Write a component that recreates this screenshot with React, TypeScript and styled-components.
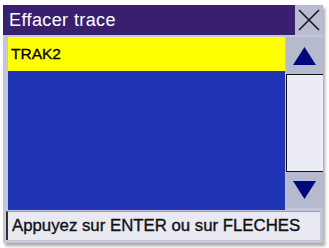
import React from 'react'
import styled, { createGlobalStyle } from 'styled-components'

const GlobalStyle = createGlobalStyle`
  body {
    margin: 0;
    background: #ffffff;
    font-family: "Liberation Sans", Arial, sans-serif;
  }
`

const Page = styled.div`
  width: 329px;
  height: 248px;
  padding: 5px 0 0 3px;
  box-sizing: border-box;
`

const Screen = styled.div`
  width: 320px;
  background: #c4c7da;
  display: flex;
  flex-direction: column;
  box-shadow: 2px 3px 3px rgba(0, 0, 0, 0.35);
`

const TitleBar = styled.div`
  display: flex;
  height: 30px;
`

const Title = styled.div`
  flex: 1;
  background: #3b1f6f;
  color: #ffffff;
  font-size: 18px;
  letter-spacing: 0.4px;
  line-height: 31px;
  padding-left: 6px;
`

const CloseButton = styled.div`
  width: 28px;
  background: #b9bcd0;
  display: flex;
  align-items: center;
  justify-content: center;
`

const Body = styled.div`
  display: flex;
  gap: 1px;
  padding: 2px 0 0 5px;
  height: 173px;
`

const List = styled.div`
  width: 277px;
  background: #1f34b4;
`

const Row = styled.div<{ $selected?: boolean }>`
  height: 34px;
  line-height: 34px;
  padding-left: 3px;
  font-size: 15.5px;
  -webkit-text-stroke: 0.3px #000;
  color: #000000;
  background: ${p => (p.$selected ? '#ffff00' : 'transparent')};
`

const Scrollbar = styled.div`
  width: 37px;
  display: flex;
  flex-direction: column;
`

const ArrowButton = styled.div<{ $h: number }>`
  height: ${p => p.$h}px;
  background: #b6bace;
  display: flex;
  align-items: center;
  justify-content: center;
`

const Track = styled.div`
  height: 96px;
  background: #ececf4;
  border: 1px solid #111111;
  border-right: none;
`

const StatusBar = styled.div`
  margin: 1px 3px 3px 3px;
  height: 29px;
  background: #e9e9f1;
  border-left: 2px solid #333333;
  border-top: 1px solid #9a9aa8;
  box-sizing: border-box;
  font-size: 16.8px;
  -webkit-text-stroke: 0.35px #111;
  line-height: 28px;
  padding-left: 4px;
  color: #111111;
  white-space: nowrap;
`

const Triangle = ({ up }: { up?: boolean }) => (
  <svg width="25" height="20" viewBox="0 0 25 20">
    <polygon points={up ? '12.5,1 24,19 1,19' : '1,1 24,1 12.5,19'} fill="#00087e" />
  </svg>
)

export default function App() {
  return (
    <>
      <GlobalStyle />
      <Page>
        <Screen>
          <TitleBar>
            <Title>Effacer trace</Title>
            <CloseButton>
              <svg width="24" height="22" viewBox="0 0 24 22">
                <path d="M2 1 L22 21 M22 1 L2 21" stroke="#111" strokeWidth="1.5" />
              </svg>
            </CloseButton>
          </TitleBar>
          <Body>
            <List>
              <Row $selected>TRAK2</Row>
            </List>
            <Scrollbar>
              <ArrowButton $h={37}>
                <Triangle up />
              </ArrowButton>
              <Track />
              <ArrowButton $h={36}>
                <Triangle />
              </ArrowButton>
            </Scrollbar>
          </Body>
          <StatusBar>Appuyez sur ENTER ou sur FLECHES</StatusBar>
        </Screen>
      </Page>
    </>
  )
}
